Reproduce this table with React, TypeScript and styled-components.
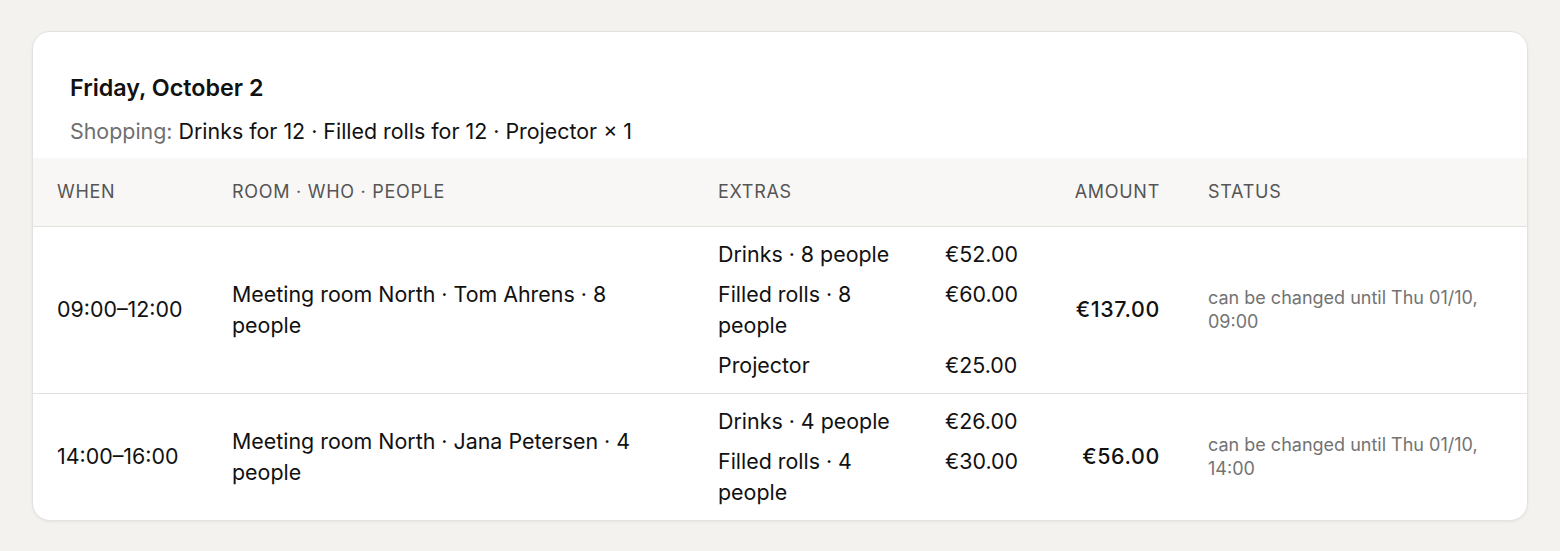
import React from "react";
import styled, { createGlobalStyle } from "styled-components";

const Global = createGlobalStyle`
  html, body { margin: 0; padding: 0; background: #f3f2ee; }
  body { font-family: Inter, "Noto Sans", sans-serif; color: #111; }
  * { box-sizing: border-box; }
`;

const Page = styled.div`
  padding: 31px 32px 30px 32px;
`;

const Card = styled.section`
  background: #fff;
  border: 1px solid #e3e2df;
  border-radius: 18px;
  box-shadow: 0 1px 3px rgba(0, 0, 0, 0.06);
  overflow: hidden;
`;

const CardHead = styled.header`
  padding: 42px 37px 13px 37px;
  display: flex;
  flex-direction: column;
  gap: 15px;
`;

const Title = styled.h2`
  margin: 0;
  font-size: 23.3px;
  line-height: 28px;
  font-weight: 600;
  color: #111;
`;

const Summary = styled.p`
  margin: 0;
  font-size: 21.4px;
  line-height: 28px;
  color: #111;
`;

const Muted = styled.span`
  color: #6f6f6f;
`;

const Table = styled.table`
  width: 100%;
  border-collapse: collapse;
  table-layout: fixed;
`;

const HeadRow = styled.tr`
  background: #f8f7f5;
  border-bottom: 1px solid #e3e2df;
`;

const Th = styled.th<{ $align?: "left" | "right" }>`
  height: 68px;
  padding: 0 24px;
  text-align: ${(p) => p.$align ?? "left"};
  font-size: 18px;
  font-weight: 400;
  letter-spacing: 0.04em;
  color: #555;
  text-transform: uppercase;
`;

const Row = styled.tr`
  & + & { border-top: 1px solid #e3e2df; }
`;

const Td = styled.td<{ $align?: "left" | "right" }>`
  padding: 12px 24px;
  vertical-align: middle;
  text-align: ${(p) => p.$align ?? "left"};
  font-size: 21.4px;
  line-height: 31px;
  color: #111;
`;

const Amount = styled(Td)`
  font-weight: 500;
  letter-spacing: 0.03em;
`;

const Status = styled(Td)`
  font-size: 18px;
  line-height: 24px;
  color: #737373;
`;

const Extras = styled.div`
  display: grid;
  grid-template-columns: 195px auto;
  column-gap: 32px;
  row-gap: 9px;
`;

const ExtraName = styled.span``;
const ExtraPrice = styled.span``;

type Extra = { name: string; price: string };
type Booking = {
  when: string;
  who: string;
  extras: Extra[];
  amount: string;
  status: string;
};

const bookings: Booking[] = [
  {
    when: "09:00–12:00",
    who: "Meeting room North · Tom Ahrens · 8 people",
    extras: [
      { name: "Drinks · 8 people", price: "€52.00" },
      { name: "Filled rolls · 8 people", price: "€60.00" },
      { name: "Projector", price: "€25.00" },
    ],
    amount: "€137.00",
    status: "can be changed until Thu 01/10, 09:00",
  },
  {
    when: "14:00–16:00",
    who: "Meeting room North · Jana Petersen · 4 people",
    extras: [
      { name: "Drinks · 4 people", price: "€26.00" },
      { name: "Filled rolls · 4 people", price: "€30.00" },
    ],
    amount: "€56.00",
    status: "can be changed until Thu 01/10, 14:00",
  },
];

export default function App() {
  return (
    <>
      <Global />
      <Page>
        <Card>
          <CardHead>
            <Title>Friday, October 2</Title>
            <Summary>
              <Muted>Shopping: </Muted>Drinks for 12 · Filled rolls for 12 · Projector × 1
            </Summary>
          </CardHead>
          <Table>
            <colgroup>
              <col style={{ width: 175 }} />
              <col style={{ width: 486 }} />
              <col style={{ width: 350 }} />
              <col style={{ width: 140 }} />
              <col />
            </colgroup>
            <thead>
              <HeadRow>
                <Th>When</Th>
                <Th>Room · Who · People</Th>
                <Th>Extras</Th>
                <Th $align="right">Amount</Th>
                <Th>Status</Th>
              </HeadRow>
            </thead>
            <tbody>
              {bookings.map((b) => (
                <Row key={b.when}>
                  <Td>{b.when}</Td>
                  <Td>{b.who}</Td>
                  <Td>
                    <Extras>
                      {b.extras.map((e) => (
                        <React.Fragment key={e.name}>
                          <ExtraName>{e.name}</ExtraName>
                          <ExtraPrice>{e.price}</ExtraPrice>
                        </React.Fragment>
                      ))}
                    </Extras>
                  </Td>
                  <Amount $align="right">{b.amount}</Amount>
                  <Status>{b.status}</Status>
                </Row>
              ))}
            </tbody>
          </Table>
        </Card>
      </Page>
    </>
  );
}
